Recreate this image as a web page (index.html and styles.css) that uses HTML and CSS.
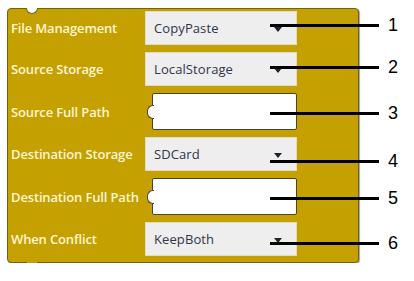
FILE: index.html
```html
<!DOCTYPE html>
<html>
<head>
<meta charset="utf-8">
<link rel="stylesheet" href="styles.css">
</head>
<body>
<div class="block">
  <span class="notch-top"></span>
  <span class="tab-bottom"></span>
  <div class="row row-1">
    <span class="label">File Management</span>
    <div class="dropdown"><span class="value">CopyPaste</span><span class="arrow"></span></div>
    <div class="ann"><span class="line"></span><span class="num">1</span></div>
  </div>
  <div class="row row-2">
    <span class="label">Source Storage</span>
    <div class="dropdown"><span class="value">LocalStorage</span><span class="arrow"></span></div>
    <div class="ann"><span class="line"></span><span class="num">2</span></div>
  </div>
  <div class="row row-3 row-input">
    <span class="label">Source Full Path</span>
    <div class="input"></div>
    <div class="ann"><span class="line"></span><span class="num">3</span></div>
  </div>
  <div class="row row-4">
    <span class="label">Destination Storage</span>
    <div class="dropdown"><span class="value">SDCard</span><span class="arrow"></span></div>
    <div class="ann"><span class="line"></span><span class="num">4</span></div>
  </div>
  <div class="row row-5 row-input">
    <span class="label">Destination Full Path</span>
    <div class="input"></div>
    <div class="ann"><span class="line"></span><span class="num">5</span></div>
  </div>
  <div class="row row-6">
    <span class="label">When Conflict</span>
    <div class="dropdown"><span class="value">KeepBoth</span><span class="arrow"></span></div>
    <div class="ann"><span class="line"></span><span class="num">6</span></div>
  </div>
</div>
</body>
</html>
```
FILE: styles.css
```css
html, body {
  margin: 0;
  padding: 0;
  background: #ffffff;
}

.block {
  position: relative;
  box-sizing: border-box;
  width: 352px;
  margin: 8px 0 0 7px;
  padding: 2px 0 6px 3px;
  background: #c4a000;
  border: 1px solid #6f6120;
  border-radius: 4px;
  box-shadow: 1px 1px 1px rgba(0, 0, 0, 0.35);
  display: flex;
  flex-direction: column;
  gap: 7px;
}

.notch-top {
  position: absolute;
  top: -1px;
  left: 18px;
  width: 10px;
  height: 5px;
  background: #ffffff;
  border: 1px solid #6f6120;
  border-top: none;
  border-radius: 0 0 6px 6px;
}

.tab-bottom {
  position: absolute;
  bottom: -7px;
  left: 18px;
  width: 10px;
  height: 6px;
  background: #c4a000;
  border: 1px solid #6f6120;
  border-top: none;
  border-radius: 0 0 6px 6px;
  box-shadow: 1px 1px 1px rgba(0, 0, 0, 0.3);
}

.row {
  position: relative;
  display: flex;
  align-items: center;
  height: 34px;
}

.row-input {
  height: 37px;
}

.label {
  width: 134px;
  flex: none;
  font-family: "Open Sans", sans-serif;
  font-weight: 600;
  font-size: 13px;
  color: #fff6d2;
  letter-spacing: -0.15px;
  white-space: nowrap;
}

.dropdown {
  position: relative;
  box-sizing: border-box;
  width: 152px;
  height: 100%;
  background: #eeeeee;
  border: 1px solid #e2dcc0;
  display: flex;
  align-items: center;
  padding-left: 8px;
}

.value {
  font-family: "Open Sans", sans-serif;
  font-size: 13px;
  color: #30354a;
  letter-spacing: 0.1px;
}

.arrow {
  position: absolute;
  right: 14px;
  top: 50%;
  margin-top: -1px;
  width: 0;
  height: 0;
  border-left: 4px solid transparent;
  border-right: 4px solid transparent;
  border-top: 5px solid #1e2330;
}

.input {
  position: relative;
  box-sizing: border-box;
  width: 145px;
  height: 100%;
  margin-left: 7px;
  background: #ffffff;
  border: 1px solid #4b4230;
  border-radius: 2px;
}

.input::before {
  content: "";
  position: absolute;
  left: -6px;
  top: 50%;
  margin-top: -7px;
  width: 6px;
  height: 12px;
  background: #ffffff;
  border: 1px solid #4b4230;
  border-right: none;
  border-radius: 6px 0 0 6px;
}

.ann {
  position: absolute;
  left: 259px;
  display: flex;
  align-items: center;
  height: 20px;
}

.line {
  display: block;
  width: 109px;
  height: 3px;
  background: #000000;
}

.num {
  margin-left: 9px;
  font-family: "Liberation Sans", Arial, sans-serif;
  font-size: 18px;
  color: #000000;
  line-height: 20px;
}

.row-1 .ann { top: 4px; }
.row-2 .ann { top: 5px; }
.row-3 .ann { top: 10px; }
.row-4 .ann { top: 14px; }
.row-5 .ann { top: 10px; }
.row-6 .ann { top: 11px; }
```
